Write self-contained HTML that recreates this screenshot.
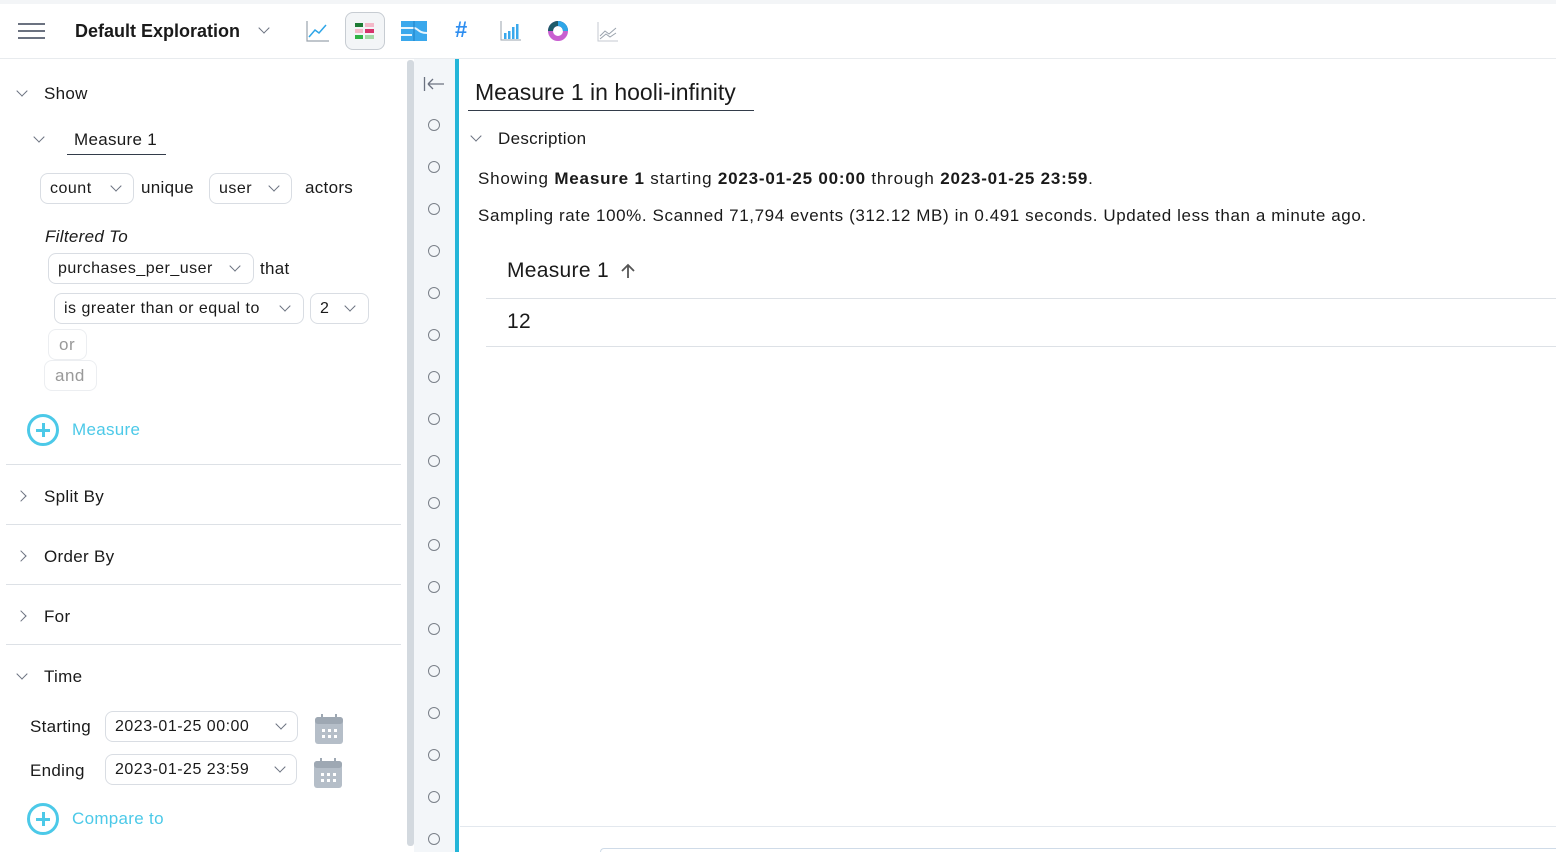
<!DOCTYPE html>
<html><head><meta charset="utf-8"><style>
*{box-sizing:border-box;margin:0;padding:0}
body{width:1556px;height:852px;overflow:hidden;background:#fff;font-family:"Liberation Sans",sans-serif;color:#1a1a1a;position:relative;font-size:17px;letter-spacing:0.3px}
.a{position:absolute;white-space:nowrap}
.chev{position:absolute;width:8px;height:8px;border-right:1.3px solid #6b7280;border-bottom:1.3px solid #6b7280;transform:rotate(45deg)}
.chr{position:absolute;width:8px;height:8px;border-right:1.3px solid #6b7280;border-bottom:1.3px solid #6b7280;transform:rotate(-45deg)}
.box{position:absolute;border:1px solid #d9dde3;border-radius:8px;height:31px;line-height:30px;padding-left:9px;font-size:16px;letter-spacing:0.5px}
.box .chev{top:8px}
.hr{position:absolute;left:6px;width:395px;height:1px;background:#dde1e6}
.circ{position:absolute;left:428px;width:12px;height:12px;border:1.3px solid #7a8089;border-radius:50%}
.plus{position:absolute;width:32px;height:32px;border:3px solid #4cc9e8;border-radius:50%}
.plus:before{content:"";position:absolute;left:6px;top:11.5px;width:14px;height:3px;background:#4cc9e8}
.plus:after{content:"";position:absolute;left:11.5px;top:6px;width:3px;height:14px;background:#4cc9e8}
.cal{position:absolute;width:28px;height:30px}
</style></head><body>
<div class="a" style="left:0;top:0;width:1556px;height:4px;background:#f3f5f7"></div>
<div class="a" style="left:0;top:58px;width:1556px;height:1px;background:#e8ebee"></div>
<div class="a" style="left:18px;top:23px;width:27px;height:2px;background:#6b7280"></div>
<div class="a" style="left:18px;top:30px;width:27px;height:2px;background:#6b7280"></div>
<div class="a" style="left:18px;top:37px;width:27px;height:2px;background:#6b7280"></div>
<div class="a" style="left:75px;top:21px;font-size:18px;font-weight:bold;letter-spacing:0">Default Exploration</div>
<div class="chev" style="left:260px;top:24px"></div>
<svg class="a" style="left:306px;top:20px" width="24" height="22"><path d="M1 1V21H23" stroke="#9aa3ad" stroke-width="1.2" fill="none"/><path d="M3 17L9 10L13 13L20 5" stroke="#2ea6e8" stroke-width="1.5" fill="none"/></svg>
<div class="a" style="left:345px;top:12px;width:40px;height:38px;border:1px solid #c7ccd2;border-radius:8px;background:#f3f5f7"></div>
<svg class="a" style="left:355px;top:23px" width="20" height="16"><rect x="0" y="0" width="8" height="4" fill="#1e7b34"/><rect x="10" y="0" width="9" height="4" fill="#f4b8c8"/><rect x="0" y="6" width="8" height="4" fill="#f4b8c8"/><rect x="10" y="6" width="9" height="4" fill="#d6336c"/><rect x="0" y="12" width="8" height="4" fill="#2fb344"/><rect x="10" y="12" width="9" height="4" fill="#a3d9a5"/></svg>
<svg class="a" style="left:400px;top:20px" width="28" height="22"><rect x="1" y="1" width="26" height="20" fill="#3aa8ec"/><path d="M1 8H14M14 8C18 8 18 13 27 13M1 15H12" stroke="#e8f5fd" stroke-width="2" fill="none"/><path d="M14 1V21" stroke="#1f7fc4" stroke-width="1"/></svg>
<div class="a" style="left:455px;top:17px;font-size:22px;font-weight:bold;color:#2e8ef0;letter-spacing:0">#</div>
<svg class="a" style="left:500px;top:21px" width="22" height="20"><path d="M1 0V19H21" stroke="#9aa3ad" stroke-width="1" fill="none"/><rect x="4" y="12" width="2.5" height="6" fill="#3aa8ec"/><rect x="8" y="10" width="2.5" height="8" fill="#3aa8ec"/><rect x="12" y="6" width="2.5" height="12" fill="#3aa8ec"/><rect x="16" y="3" width="2.5" height="15" fill="#3aa8ec"/></svg>
<svg class="a" style="left:547px;top:20px" width="22" height="22"><circle cx="11" cy="11" r="7.5" fill="none" stroke="#c85fd0" stroke-width="5"/><path d="M3.5 11A7.5 7.5 0 0 1 18.5 11" fill="none" stroke="#1e5a6a" stroke-width="5"/><path d="M11 3.5A7.5 7.5 0 0 1 18.5 11" fill="none" stroke="#2ea6e8" stroke-width="5"/></svg>
<svg class="a" style="left:597px;top:22px" width="22" height="20"><path d="M1 0V19H21" stroke="#c5cad0" stroke-width="1" fill="none"/><path d="M3 14L8 9L12 12L19 6M3 17L9 12L13 15L19 11" stroke="#9aa3ad" stroke-width="1" fill="none"/></svg>

<div class="chev" style="left:18px;top:87px"></div>
<div class="a" style="left:44px;top:84px">Show</div>
<div class="chev" style="left:35px;top:133px"></div>
<div class="a" style="left:74px;top:130px">Measure 1</div>
<div class="a" style="left:67px;top:154px;width:99px;height:1px;background:#333c4a"></div>
<div class="box" style="left:40px;top:173px;width:94px">count<div class="chev" style="left:71px"></div></div>
<div class="a" style="left:141px;top:178px">unique</div>
<div class="box" style="left:209px;top:173px;width:83px">user<div class="chev" style="left:60px"></div></div>
<div class="a" style="left:305px;top:178px">actors</div>
<div class="a" style="left:45px;top:227px;font-style:italic">Filtered To</div>
<div class="box" style="left:48px;top:253px;width:206px">purchases_per_user<div class="chev" style="left:182px"></div></div>
<div class="a" style="left:260px;top:259px">that</div>
<div class="box" style="left:54px;top:293px;width:250px">is greater than or equal to<div class="chev" style="left:226px"></div></div>
<div class="box" style="left:310px;top:293px;width:59px">2<div class="chev" style="left:35px"></div></div>
<div class="box" style="left:48px;top:329px;width:39px;color:#999;border-color:#eceef1;padding-left:10px;font-size:17px">or</div>
<div class="box" style="left:44px;top:360px;width:53px;color:#999;border-color:#eceef1;padding-left:10px;font-size:17px">and</div>
<div class="plus" style="left:27px;top:414px"></div>
<div class="a" style="left:72px;top:420px;color:#4cc9e8">Measure</div>
<div class="hr" style="top:464px"></div>
<div class="chr" style="left:17px;top:492px"></div>
<div class="a" style="left:44px;top:487px">Split By</div>
<div class="hr" style="top:524px"></div>
<div class="chr" style="left:17px;top:552px"></div>
<div class="a" style="left:44px;top:547px">Order By</div>
<div class="hr" style="top:584px"></div>
<div class="chr" style="left:17px;top:612px"></div>
<div class="a" style="left:44px;top:607px">For</div>
<div class="hr" style="top:644px"></div>
<div class="chev" style="left:18px;top:670px"></div>
<div class="a" style="left:44px;top:667px">Time</div>
<div class="a" style="left:30px;top:717px">Starting</div>
<div class="box" style="left:105px;top:711px;width:193px">2023-01-25 00:00<div class="chev" style="left:171px"></div></div>
<div class="a" style="left:30px;top:761px">Ending</div>
<div class="box" style="left:105px;top:754px;width:192px">2023-01-25 23:59<div class="chev" style="left:170px"></div></div>
<svg class="cal" style="left:315px;top:714px"><rect x="0" y="3" width="28" height="27" rx="3" fill="#b5bec8"/><rect x="0" y="3" width="28" height="7" rx="3" fill="#9ea8b3"/><rect x="6" y="0" width="2" height="6" fill="#9ea8b3"/><rect x="20" y="0" width="2" height="6" fill="#9ea8b3"/><g fill="#fff"><rect x="7" y="15" width="3" height="3"/><rect x="13" y="15" width="3" height="3"/><rect x="19" y="15" width="3" height="3"/><rect x="7" y="21" width="3" height="3"/><rect x="13" y="21" width="3" height="3"/><rect x="19" y="21" width="3" height="3"/></g></svg>
<svg class="cal" style="left:314px;top:758px"><rect x="0" y="3" width="28" height="27" rx="3" fill="#b5bec8"/><rect x="0" y="3" width="28" height="7" rx="3" fill="#9ea8b3"/><rect x="6" y="0" width="2" height="6" fill="#9ea8b3"/><rect x="20" y="0" width="2" height="6" fill="#9ea8b3"/><g fill="#fff"><rect x="7" y="15" width="3" height="3"/><rect x="13" y="15" width="3" height="3"/><rect x="19" y="15" width="3" height="3"/><rect x="7" y="21" width="3" height="3"/><rect x="13" y="21" width="3" height="3"/><rect x="19" y="21" width="3" height="3"/></g></svg>
<div class="plus" style="left:27px;top:803px"></div>
<div class="a" style="left:72px;top:809px;color:#4cc9e8">Compare to</div>

<div class="a" style="left:407px;top:60px;width:7px;height:786px;background:#d3d9df;border-radius:3px"></div>
<div class="a" style="left:414px;top:59px;width:41px;height:793px;background:#f3f6f9"></div>
<div class="a" style="left:455px;top:59px;width:4px;height:793px;background:#23b5d8"></div>
<svg class="a" style="left:423px;top:75px" width="22" height="18"><path d="M1.5 2V16M5 9H21M5 9L10 4M5 9L10 14" stroke="#6b7280" stroke-width="1.3" fill="none"/></svg>
<div class="circ" style="top:119px"></div><div class="circ" style="top:161px"></div><div class="circ" style="top:203px"></div><div class="circ" style="top:245px"></div><div class="circ" style="top:287px"></div><div class="circ" style="top:329px"></div><div class="circ" style="top:371px"></div><div class="circ" style="top:413px"></div><div class="circ" style="top:455px"></div><div class="circ" style="top:497px"></div><div class="circ" style="top:539px"></div><div class="circ" style="top:581px"></div><div class="circ" style="top:623px"></div><div class="circ" style="top:665px"></div><div class="circ" style="top:707px"></div><div class="circ" style="top:749px"></div><div class="circ" style="top:791px"></div><div class="circ" style="top:833px"></div>

<div class="a" style="left:475px;top:79px;font-size:23px;letter-spacing:0">Measure 1 in hooli-infinity</div>
<div class="a" style="left:468px;top:110px;width:286px;height:1px;background:#333c4a"></div>
<div class="chev" style="left:472px;top:132px"></div>
<div class="a" style="left:498px;top:129px">Description</div>
<div class="a" style="left:478px;top:169px;letter-spacing:0.8px">Showing <b>Measure 1</b> starting <b>2023-01-25 00:00</b> through <b>2023-01-25 23:59</b>.</div>
<div class="a" style="left:478px;top:206px;letter-spacing:0.6px">Sampling rate 100%. Scanned 71,794 events (312.12 MB) in 0.491 seconds. Updated less than a minute ago.</div>
<div class="a" style="left:507px;top:259px;font-size:21px">Measure 1</div>
<svg class="a" style="left:620px;top:263px" width="16" height="16"><path d="M8 15V2M2 8L8 2L14 8" stroke="#555" stroke-width="1.8" fill="none"/></svg>
<div class="a" style="left:486px;top:298px;width:1070px;height:1px;background:#dde1e6"></div>
<div class="a" style="left:507px;top:310px;font-size:21px">12</div>
<div class="a" style="left:486px;top:346px;width:1070px;height:1px;background:#dde1e6"></div>
<div class="a" style="left:460px;top:826px;width:1096px;height:1px;background:#e3e8ee"></div>
<div class="a" style="left:600px;top:848px;width:956px;height:4px;border-top:1px solid #cfdbe8;border-left:1px solid #cfdbe8;border-radius:4px 0 0 0"></div>
</body></html>
